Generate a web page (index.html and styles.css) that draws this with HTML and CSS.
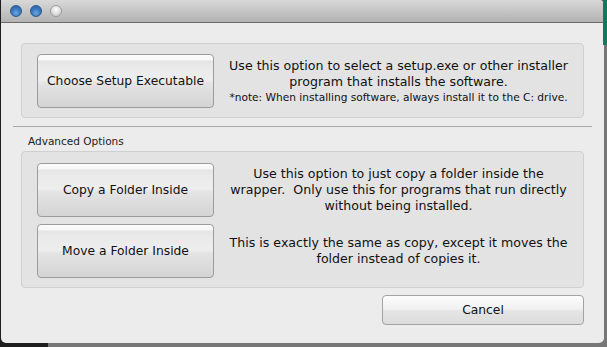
FILE: index.html
```html
<!DOCTYPE html>
<html lang="en">
<head>
    <meta charset="UTF-8">
    <title>Install Software</title>
    <link rel="stylesheet" href="styles.css">
</head>
<body>
    <div class="desktop">
        <div class="window">
            <div class="titlebar">
                <span class="light active"></span>
                <span class="light active"></span>
                <span class="light"></span>
            </div>
            <div class="content">
                <div class="group top-group">
                    <div class="option">
                        <button class="aqua big">Choose Setup Executable</button>
                        <div class="desc">
                            Use this option to select a setup.exe or other installer<br>
                            program that installs the software.
                            <div class="note">*note: When installing software, always install it to the C: drive.</div>
                        </div>
                    </div>
                </div>
                <div class="separator"></div>
                <div class="group-label">Advanced Options</div>
                <div class="group adv-group">
                    <div class="option">
                        <button class="aqua big">Copy a Folder Inside</button>
                        <div class="desc">
                            Use this option to just copy a folder inside the<br>
                            wrapper.&nbsp; Only use this for programs that run directly<br>
                            without being installed.
                        </div>
                    </div>
                    <div class="option">
                        <button class="aqua big">Move a Folder Inside</button>
                        <div class="desc">
                            This is exactly the same as copy, except it moves the<br>
                            folder instead of copies it.
                        </div>
                    </div>
                </div>
                <div class="footer">
                    <button class="aqua cancel">Cancel</button>
                </div>
            </div>
        </div>
    </div>
</body>
</html>
```

FILE: styles.css
```css
body {
    margin: 0;
    background-color: #777777;
    font-family: "DejaVu Sans", sans-serif;
    overflow: hidden;
}
.desktop {
    width: 607px;
    height: 347px;
    background: linear-gradient(to right, #1e1e1e 0, #1e1e1e 48px, #777777 48px);
    position: relative;
}
.desktop::after {
    content: "";
    position: absolute;
    right: 0;
    top: 0;
    width: 4px;
    height: 45px;
    background-color: #127a5c;
}
.window {
    width: 603px;
    height: 343px;
    margin-left: 1px;
    background-color: #ececec;
    border-radius: 0 5px 5px 5px;
    display: flex;
    flex-direction: column;
    overflow: hidden;
}
.titlebar {
    height: 22px;
    background: linear-gradient(#d8d8d8, #b3b3b3);
    border-bottom: 1px solid #6a6a6a;
    display: flex;
    align-items: center;
    gap: 8px;
    padding-left: 9px;
    flex-shrink: 0;
}
.light {
    width: 12px;
    height: 12px;
    border-radius: 50%;
    box-sizing: border-box;
    border: 1px solid #9a9a9a;
    background: radial-gradient(circle at 50% 35%, #ffffff 0, #e2e2e2 45%, #c4c4c4 100%);
}
.light.active {
    border-color: #2a5a8c;
    background: radial-gradient(circle at 50% 70%, #6aa6e0 0, #3a78bd 50%, #2a5e9e 100%);
}
.content {
    padding: 20px 20px 0 20px;
    display: flex;
    flex-direction: column;
}
.group {
    background-color: #e3e3e3;
    border: 1px solid #d0d0d0;
    border-radius: 4px;
    padding: 10px 0 9px 15px;
}
.adv-group {
    padding: 11px 0 9px 15px;
    display: flex;
    flex-direction: column;
    gap: 7px;
}
.option {
    display: flex;
    align-items: center;
}
.aqua {
    font-family: "DejaVu Sans", sans-serif;
    font-size: 12.3px;
    color: #111;
    border: 1px solid #9c9c9c;
    border-radius: 4px;
    background: linear-gradient(to bottom,
        #fbfbfb 0, #f7f7f7 5px, #e4e4e4 6px, #e9e9e9 10px,
        #eeeeee 48%, #e4e4e4 54%, #d4d4d4 100%);
    padding: 0;
}
.big {
    width: 177px;
    height: 54px;
    flex-shrink: 0;
}
.desc {
    flex: 1;
    text-align: center;
    font-size: 12.6px;
    line-height: 16px;
    color: #111;
    padding: 0 4px;
    white-space: nowrap;
}
.note {
    font-size: 10.6px;
    line-height: 15px;
}
.separator {
    height: 1px;
    background-color: #a9a9a9;
    margin: 8px -8px 0 -8px;
}
.group-label {
    font-size: 10.5px;
    color: #222;
    padding: 8px 0 4px 7px;
}
.footer {
    display: flex;
    justify-content: flex-end;
    padding-top: 7px;
}
.cancel {
    width: 202px;
    height: 30px;
    border-color: #a3a3a3;
    background: linear-gradient(to bottom, #fcfcfc 0, #f1f1f1 45%, #e4e4e4 55%, #dcdcdc 100%);
}
```
